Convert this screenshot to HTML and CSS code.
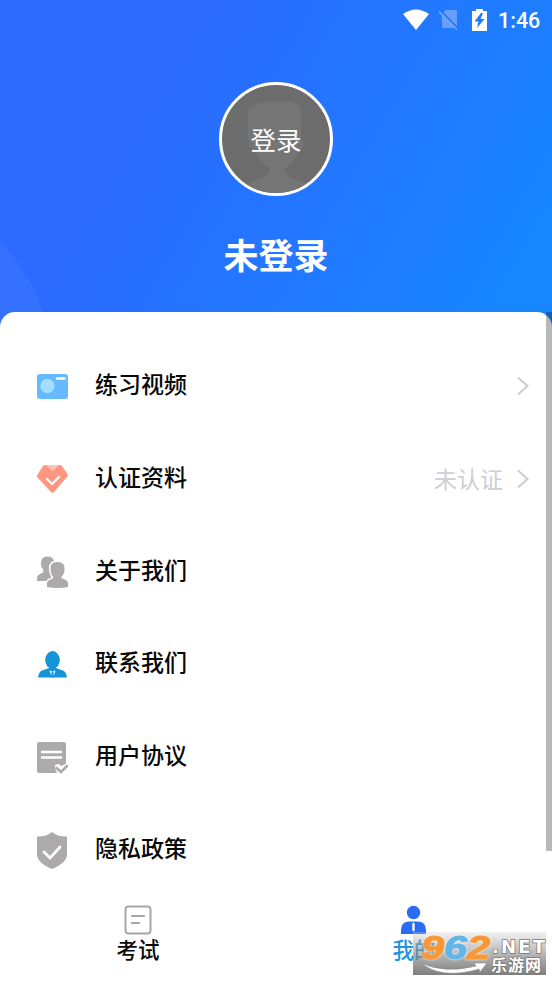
FILE: index.html
```html
<!DOCTYPE html>
<html lang="zh-CN">
<head>
<meta charset="utf-8">
<title>我的</title>
<link rel="stylesheet" href="styles.css">
</head>
<body>
<div class="app">
  <header class="hero">
    <div class="status">
      <svg width="28" height="22" viewBox="0 0 28 22"><path d="M1 5Q14-4 27 5L14 21Z" fill="#fff"/></svg>
      <svg class="sim" width="20" height="22" viewBox="0 0 20 22"><path d="M7 1h11v18H3V5Z" fill="#689fff"/><path d="M1.500 2l18 18" stroke="#2474fd" stroke-width="2"/><path d="M0 2.500l18 18" stroke="#73a9ff" stroke-width="1.600"/></svg>
      <svg class="battery" width="15" height="22" viewBox="0 0 15 22"><path d="M4 0h7v2h4v20H0V2h4Z" fill="#fff"/><path d="M9 4L2.500 12.500h4L5 19l7.500-9H8.500L11 4Z" fill="#2474fd"/></svg>
      <span class="clock">1:46</span>
    </div>
    <div class="avatar">
      <svg class="portrait" width="108" height="108" viewBox="0 0 108 108"><path d="M26 27q0-6 7-7 2-3 8-3h28q10 0 10 10v28h2q1 9-4 10-3 12-14 18v4q3 6 15 9 11 4 14 12H16q6-9 17-13 13-3 15-9v-3Q36 76 32 65q-6-2-5-10h-1Z" fill="#757575"/></svg>
      <span class="login">登录</span>
    </div>
    <h1 class="name">未登录</h1>
  </header>
  <main class="panel">
    <div class="row">
      <svg class="icon" width="32" height="38" viewBox="0 0 32 38"><rect x="1" y="7" width="31" height="25" rx="3" fill="#64b9ff"/><circle cx="11.500" cy="19" r="7.200" fill="#a4deff"/><path d="M21 11.500h7.500" stroke="#fff" stroke-width="2.400" stroke-linecap="round"/></svg>
      <span class="label">练习视频</span>
      <svg class="chevron" width="14" height="22" viewBox="0 0 14 22"><path d="M2 2.500l9.500 8.500L2 19.500" fill="none" stroke="#cbcbd2" stroke-width="2"/></svg>
    </div>
    <div class="row">
      <svg class="icon" width="32" height="38" viewBox="0 0 32 38"><path d="M9 5h15q1 0 2 1l5.500 8q1 2-.5 3L18 32q-1.500 1.500-3 0L1.500 17.500q-1-1 0-3L7 6q1-1 2-1Z" fill="#ff9780"/><path d="M10 5h13l-5 5q-1.500 1.500-3 0Z" fill="#ffc2b5"/><path d="M11 19l5 5 7-7" fill="none" stroke="#fff" stroke-width="2.200" stroke-linecap="round"/></svg>
      <span class="label">认证资料</span>
      <span class="value">未认证</span>
      <svg class="chevron" width="14" height="22" viewBox="0 0 14 22"><path d="M2 2.500l9.500 8.500L2 19.500" fill="none" stroke="#cbcbd2" stroke-width="2"/></svg>
    </div>
    <div class="row">
      <svg class="icon" width="32" height="38" viewBox="0 0 32 38"><path d="M5 12q-1-8.500 6.500-8.500T18 11q0 4-2 6v3l3 3v5H1v-3q0-3 5-5 2-1 1-4-2-2-2-4Z" fill="#acaaaa"/><path d="M14.500 16.500q-1-7.500 7-7.500t7 7.500q0 4.500-3 7v2q6.500 1.500 6.500 4.500v4q-10.500 2-21 0v-4q0-2.500 6-4.500v-2q-2-2-2.500-7Z" fill="#acaaaa" stroke="#fff" stroke-width="3" paint-order="stroke"/></svg>
      <span class="label">关于我们</span>
    </div>
    <div class="row">
      <svg class="icon" width="32" height="38" viewBox="0 0 32 38"><ellipse cx="16.500" cy="15" rx="7.300" ry="9" fill="#1595d8"/><path d="M2 32.500q1-6 4-7l7-2.500h7l7 2.500q3 1 4 7Z" fill="#1595d8"/><path d="M13.500 25.500l2.500 7h1l2.500-7-3 1Z" fill="#fff"/><path d="M15.700 26.500h1.600l.7 6h-3Z" fill="#1595d8"/></svg>
      <span class="label">联系我们</span>
    </div>
    <div class="row">
      <svg class="icon" width="32" height="38" viewBox="0 0 32 38"><path d="M3 4h25q2 0 2 2v20l-5 2-2-2q-5 0-4 4l2 5H3q-2 0-2-2V6q0-2 2-2Z" fill="#acaaaa"/><path d="M6 14h19M6 19.500h19" stroke="#fff" stroke-width="2.400" stroke-linecap="round"/><path d="M21 30l4 3.500 6.500-6" fill="none" stroke="#fff" stroke-width="5"/><path d="M20.500 30l4.500 4 6-6" fill="none" stroke="#acaaaa" stroke-width="2.600" stroke-linecap="round"/></svg>
      <span class="label">用户协议</span>
    </div>
    <div class="row">
      <svg class="icon" width="32" height="38" viewBox="0 0 32 38"><path d="M16 1q6 5 15 4.500V23q0 9-15 15Q1 32 1 23V5.500Q10 6 16 1Z" fill="#acaaaa"/><path d="M8 21l6 6 10-11" fill="none" stroke="#fff" stroke-width="2.800" stroke-linecap="round"/></svg>
      <span class="label">隐私政策</span>
    </div>
  </main>
  <div class="scrollbar"></div>
  <nav class="tabs">
    <div class="tab">
      <svg width="28" height="30" viewBox="0 0 28 30"><rect x="1.500" y="1.500" width="25" height="27" rx="3" fill="none" stroke="#a6a6a6" stroke-width="2"/><path d="M8 11h12M8 18h7" stroke="#a6a6a6" stroke-width="2.200" stroke-linecap="round"/></svg>
      <span>考试</span>
    </div>
    <div class="tab tab-active">
      <svg width="28" height="30" viewBox="0 0 28 30"><circle cx="13.500" cy="7.500" r="6.700" fill="#2a6cf6"/><path d="M1 29V25q0-8.500 8.500-8.500h8q8.500 0 8.500 8.500v4Z" fill="#2a6cf6"/><path d="M13.500 19v6" stroke="#fff" stroke-width="2.400" stroke-linecap="round"/></svg>
      <span>我的</span>
    </div>
  </nav>
  <div class="watermark">
    <svg width="133" height="44" viewBox="0 0 133 44">
      <g class="mark-number"><text x="8" y="26.500" textLength="23" lengthAdjust="spacingAndGlyphs" fill="#f89735" stroke="#f89735">9</text><text x="31" y="26.500" textLength="23" lengthAdjust="spacingAndGlyphs" fill="#64b5e8" stroke="#64b5e8">6</text><text x="54" y="26.500" textLength="23" lengthAdjust="spacingAndGlyphs" fill="#f89735" stroke="#f89735">2</text></g>
      <text class="mark-net" x="79" y="21" textLength="53">.NET</text>
      <text class="mark-cn" x="78" y="39" textLength="50">乐游网</text>
      <path d="M8 31q24 11 55 3l-2-3 13 0-7 9-1-3Q29 48 8 31Z" fill="#fff" stroke="#888" stroke-width=".6"/>
    </svg>
  </div>
</div>
</body>
</html>
```
FILE: styles.css
```css
* { box-sizing: border-box; }
body {
  margin: 0;
  background: #fff;
  font-family: Roboto, "Noto Sans CJK SC", sans-serif;
}
.app {
  position: relative;
  width: 552px;
  height: 981px;
  overflow: hidden;
  display: flex;
  flex-direction: column;
}
.hero {
  flex: none;
  height: 330px;
  display: flex;
  flex-direction: column;
  align-items: center;
  color: #fff;
  background:
    radial-gradient(circle at -180px 400px, rgba(255,255,255,.04) 240px, transparent 241px),
    linear-gradient(120deg, #2b6bff 30%, #1687ff 94%);
}
.status {
  width: 100%;
  height: 40px;
  padding-right: 12px;
  display: flex;
  align-items: center;
  justify-content: flex-end;
}
.sim { margin-left: 9px; }
.battery { margin-left: 13px; }
.clock {
  width: 42px;
  margin-left: 11px;
  font-size: 21.5px;
  font-weight: 500;
  white-space: nowrap;
}
.avatar {
  width: 114px;
  height: 114px;
  margin-top: 42px;
  border: 3px solid #fff;
  border-radius: 50%;
  background: #6c6c6c;
  overflow: hidden;
  display: grid;
  place-items: center;
}
.portrait, .login { grid-area: 1 / 1; }
.login {
  z-index: 1;
  padding-top: 4px;
  font-size: 25.5px;
  line-height: 36px;
}
.name {
  margin: 36px 0 0;
  font-size: 35px;
  line-height: 52px;
  font-weight: 700;
}
.panel {
  flex: none;
  height: 583px;
  margin-top: -18px;
  padding: 28px 22px 0 36px;
  border-radius: 15px 15px 0 0;
  background: #fff;
}
.row {
  height: 92.7px;
  display: flex;
  align-items: center;
}
.label {
  margin-left: 27px;
  font-size: 23px;
  line-height: 34px;
  font-weight: 500;
  color: #080808;
}
.value {
  margin-left: auto;
  padding-top: 4px;
  font-size: 23px;
  line-height: 34px;
  color: #ceced5;
}
.chevron { margin-left: auto; }
.value + .chevron { margin-left: 13px; }
.scrollbar {
  position: absolute;
  top: 312px;
  right: 0;
  width: 6px;
  height: 539px;
  background: rgba(0,0,0,.28);
}
.tabs {
  height: 86px;
  display: flex;
}
.tab {
  flex: 1;
  padding-top: 10px;
  display: flex;
  flex-direction: column;
  align-items: center;
  font-size: 21.5px;
  line-height: 32px;
  font-weight: 500;
  color: #080808;
}
.tab-active { color: #2196dc; }
.watermark {
  position: absolute;
  left: 413px;
  top: 932px;
  width: 133px;
  height: 43px;
  background: linear-gradient(rgba(210,210,210,.3), rgba(112,112,112,.9));
}
.watermark svg { display: block; overflow: visible; }
.mark-number {
  font: italic 700 33px "Liberation Sans", sans-serif;
  stroke-width: 1.2px;
  filter: drop-shadow(0 0 1px #fff);
}
.mark-net, .mark-cn {
  fill: #fff;
  stroke: #777;
  stroke-width: 1.5px;
  paint-order: stroke;
}
.mark-net { font: 700 18px "DejaVu Sans", sans-serif; }
.mark-cn { font: 700 16px "Noto Sans CJK SC", sans-serif; }
```
